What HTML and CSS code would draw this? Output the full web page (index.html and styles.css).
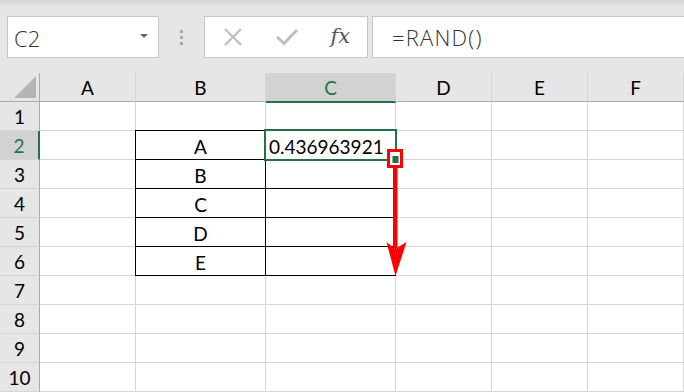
FILE: index.html
```html
<!DOCTYPE html>
<html lang="en">
<head>
    <meta charset="UTF-8">
    <meta name="viewport" content="width=device-width, initial-scale=1.0">
    <title>RAND</title>
    <link rel="stylesheet" href="styles.css">
</head>
<body>
    <div class="app">
        <!-- formula bar -->
        <div class="toolbar">
            <div class="namebox">
                <span class="name">C2</span>
                <svg class="drop" width="8" height="4" viewBox="0 0 8 4"><polygon points="0,0 8,0 4,4" fill="#666"/></svg>
            </div>
            <div class="grip"><i></i><i></i><i></i></div>
            <div class="fnbox">
                <svg width="20" height="18" viewBox="0 0 20 18"><path d="M2 1 L18 17 M18 1 L2 17" stroke="#bdbdbd" stroke-width="2.2" fill="none"/></svg>
                <svg width="22" height="18" viewBox="0 0 22 18"><path d="M1 9 L8 15.5 L21 2" stroke="#bdbdbd" stroke-width="3" fill="none"/></svg>
                <span class="fx">fx</span>
            </div>
            <div class="formula">=RAND()</div>
        </div>

        <!-- sheet -->
        <div class="sheet">
            <div class="corner"><svg width="22" height="22" viewBox="0 0 22 22"><polygon points="22,0 22,22 0,22" fill="#b4b4b4"/></svg></div>
            <div class="colhead">A</div>
            <div class="colhead">B</div>
            <div class="colhead active">C</div>
            <div class="colhead">D</div>
            <div class="colhead">E</div>
            <div class="colhead">F</div>

            <div class="rowhead">1</div>
            <div class="cell"></div><div class="cell"></div><div class="cell"></div><div class="cell"></div><div class="cell"></div><div class="cell"></div>

            <div class="rowhead active">2</div>
            <div class="cell"></div><div class="cell tb top center">A</div><div class="cell tc top num">0.436963921</div><div class="cell"></div><div class="cell"></div><div class="cell"></div>

            <div class="rowhead">3</div>
            <div class="cell"></div><div class="cell tb center">B</div><div class="cell tc"></div><div class="cell"></div><div class="cell"></div><div class="cell"></div>

            <div class="rowhead">4</div>
            <div class="cell"></div><div class="cell tb center">C</div><div class="cell tc"></div><div class="cell"></div><div class="cell"></div><div class="cell"></div>

            <div class="rowhead">5</div>
            <div class="cell"></div><div class="cell tb center">D</div><div class="cell tc"></div><div class="cell"></div><div class="cell"></div><div class="cell"></div>

            <div class="rowhead">6</div>
            <div class="cell"></div><div class="cell tb center">E</div><div class="cell tc"></div><div class="cell"></div><div class="cell"></div><div class="cell"></div>

            <div class="rowhead">7</div>
            <div class="cell"></div><div class="cell"></div><div class="cell"></div><div class="cell"></div><div class="cell"></div><div class="cell"></div>

            <div class="rowhead">8</div>
            <div class="cell"></div><div class="cell"></div><div class="cell"></div><div class="cell"></div><div class="cell"></div><div class="cell"></div>

            <div class="rowhead">9</div>
            <div class="cell"></div><div class="cell"></div><div class="cell"></div><div class="cell"></div><div class="cell"></div><div class="cell"></div>

            <div class="rowhead">10</div>
            <div class="cell"></div><div class="cell"></div><div class="cell"></div><div class="cell"></div><div class="cell"></div><div class="cell"></div>

            <div class="selection"></div>
        </div>

        <!-- fill handle annotation -->
        <svg class="mark" width="684" height="392" viewBox="0 0 684 392">
            <rect x="390" y="152" width="10" height="13" fill="#fff"/>
            <rect x="392.5" y="156" width="6" height="7" fill="#217346"/>
            <rect x="388.5" y="150.5" width="13" height="16" fill="none" stroke="#ff0000" stroke-width="3"/>
            <rect x="393" y="168" width="4.5" height="80" fill="#ff0000"/>
            <polygon points="386.5,242 395.3,249 406.5,242 395.5,276" fill="#ff0000"/>
        </svg>
    </div>
</body>
</html>
```

FILE: styles.css
```css
body {
    margin: 0;
    padding: 0;
    background: #ffffff;
}
.app {
    position: relative;
    width: 684px;
    height: 392px;
    overflow: hidden;
    font-family: Lato, "Noto Sans", sans-serif;
}
.toolbar {
    height: 73px;
    box-sizing: border-box;
    padding: 16px 0 0 7px;
    display: flex;
    align-items: flex-start;
    background: linear-gradient(to bottom, #d6d6d6 0, #e6e6e6 7px, #e6e6e6 100%);
}
.namebox, .fnbox, .formula {
    height: 42px;
    box-sizing: border-box;
    background-color: #ffffff;
    border: 1px solid #c6c6c6;
    display: flex;
    align-items: center;
}
.namebox {
    width: 152px;
    padding: 0 10px 0 6px;
    justify-content: space-between;
}
.name {
    font-family: "Open Sans", sans-serif;
    font-weight: 300;
    font-size: 22px;
    color: #333;
    padding-top: 2px;
}
.drop {
    margin-top: -2px;
}
.grip {
    width: 45px;
    height: 42px;
    display: flex;
    flex-direction: column;
    align-items: center;
    justify-content: center;
    gap: 3px;
}
.grip i {
    display: block;
    width: 3px;
    height: 3px;
    background-color: #a8a8a8;
}
.fnbox {
    width: 164px;
    padding: 0 17px 0 18px;
    justify-content: space-between;
}
.fx {
    font-family: "DejaVu Serif", "Liberation Serif", serif;
    font-style: italic;
    font-size: 21px;
    color: #555;
    padding-bottom: 3px;
}
.formula {
    flex: 1;
    margin-left: 4px;
    margin-right: -10px;
    padding-left: 19px;
    font-family: "Open Sans", sans-serif;
    font-weight: 300;
    font-size: 22px;
    letter-spacing: 1.2px;
    color: #333;
}
.sheet {
    position: relative;
    display: grid;
    grid-template-columns: 40px 96px 130px 130px 96px 96px 1fr;
    grid-template-rows: repeat(11, 29px);
    font-size: 19px;
    color: #000;
}
.sheet > div {
    box-sizing: border-box;
    border-right: 1px solid #d4d4d4;
    border-bottom: 1px solid #d4d4d4;
}
.corner, .colhead, .rowhead {
    background-color: #e6e6e6;
    display: flex;
    align-items: center;
    justify-content: center;
}
.sheet > .corner {
    border-right: 1px solid #ababab;
    border-bottom: 1px solid #ababab;
    justify-content: flex-end;
    align-items: flex-end;
    padding: 0 3px 3px 0;
}
.sheet > .colhead {
    border-bottom: 1px solid #ababab;
    padding-top: 1px;
}
.sheet > .rowhead {
    border-right: 1px solid #ababab;
}
.sheet > .colhead.active {
    background-color: #d2d2d2;
    color: #217346;
    border-bottom: 2px solid #217346;
    margin-bottom: -1px;
    position: relative;
    z-index: 1;
}
.sheet > .rowhead.active {
    background-color: #d2d2d2;
    color: #217346;
    border-right: 2px solid #217346;
}
.cell {
    display: flex;
    align-items: center;
    padding: 2px 0 0 3px;
}
.center {
    justify-content: center;
    padding-left: 0;
}
.sheet > .tb {
    border-left: 1px solid #000;
    margin-left: -1px;
    border-right: 1px solid #000;
    border-bottom: 1px solid #000;
}
.sheet > .tc {
    border-bottom: 1px solid #000;
    border-right: 1px solid #000;
}
.sheet > .top {
    border-top: 1px solid #000;
    margin-top: -1px;
}
.selection {
    position: absolute;
    left: 264px;
    top: 56px;
    width: 133px;
    height: 32px;
    border: 2px solid #217346 !important;
    box-sizing: border-box;
}
.mark {
    position: absolute;
    left: 0;
    top: 0;
    pointer-events: none;
}
```
